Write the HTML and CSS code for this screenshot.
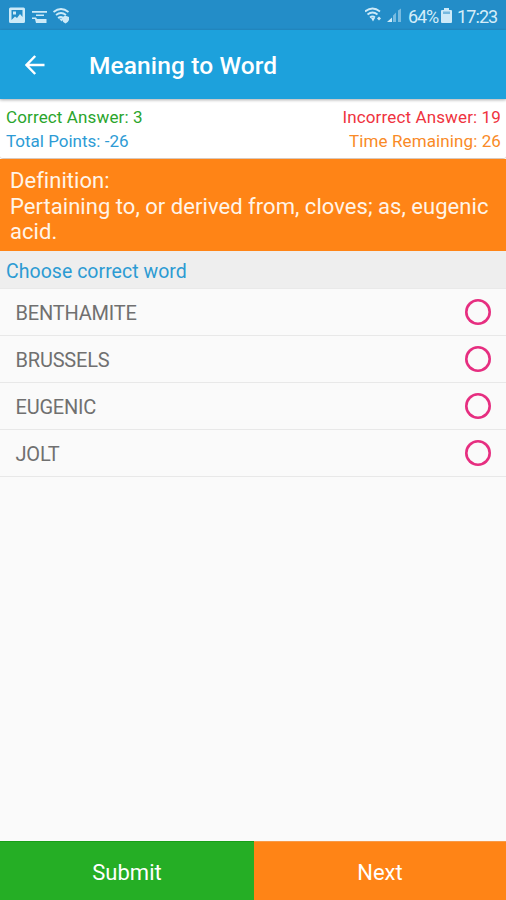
FILE: index.html
```html
<!DOCTYPE html>
<html lang="en">
<head>
<meta charset="utf-8">
<title>Meaning to Word</title>
<link rel="stylesheet" href="styles.css">
</head>
<body>
<div class="status">
  <svg class="notices" width="64" height="18" viewBox="0 0 64 18">
    <path fill-rule="evenodd" d="M2.500 .5h13a1.500 1.500 0 0 1 1.500 1.500v12.500a1.500 1.500 0 0 1-1.500 1.500H2.500a1.500 1.500 0 0 1-1.500-1.500V2A1.500 1.500 0 0 1 2.500 .5zM3.500 3v10l3.500-3.500 2 1.500 3-4 2.500 3V3zM5 4.500h3v3H5z"/>
    <path d="M24 4h15v1.800H24zM28 7.500h8V9h-8zM24 10.500h4l1 1.500h9.500v4H28l-1-4h-3z"/>
    <g class="line"><path d="M45.500 5q7.500-6 15 0M48 8q5-4 10 0M50 11q3-2 5 0"/></g>
    <path d="M51 11.500h4l-1.500 3zM57 8.500l4 1.500v3q-1 2.500-3.500 3.500-3-1.500-3.500-4v-2z"/>
  </svg>
  <div class="status-right">
    <svg width="38" height="18" viewBox="0 0 38 18">
      <g class="line"><path d="M0 4.500q7.500-6 15 0M2.500 7.500q5-4 10 0M5 10.500q2.500-2 5 0"/></g>
      <path d="M6 11h4l-2 3.500zM14 9.500l2 2-2 2-2-2zM22 15l5-4.500V15z"/>
      <path class="faint" d="M28 8.500l3-3V15h-3zM33 3.500l3-2V15h-3z"/>
    </svg>
    <span class="percent">64%</span>
    <svg class="battery" width="11" height="16" viewBox="0 0 11 16"><path d="M3 0h5v2h2q1 0 1 1v11q0 1-1 1H1q-1 0-1-1V3q0-1 1-1h2z"/><path class="gap" d="M2 3.500h7V6H2z"/></svg>
    <span class="clock">17:23</span>
  </div>
</div>
<header class="bar">
  <svg width="20" height="20" viewBox="0 0 20 20"><path d="M19.500 10H2M10.200 1L1.500 10l8.700 9"/></svg>
  <h1>Meaning to Word</h1>
</header>
<section class="score">
  <div class="row"><span class="correct">Correct Answer: 3</span><span class="incorrect">Incorrect Answer: 19</span></div>
  <div class="row"><span class="points">Total Points: -26</span><span class="time">Time Remaining: 26</span></div>
</section>
<section class="definition">Definition:<br>Pertaining to, or derived from, cloves; as, eugenic<br>acid.</section>
<div class="prompt">Choose correct word</div>
<ul class="options">
  <li><span>BENTHAMITE</span><i class="radio"></i></li>
  <li><span>BRUSSELS</span><i class="radio"></i></li>
  <li><span>EUGENIC</span><i class="radio"></i></li>
  <li><span>JOLT</span><i class="radio"></i></li>
</ul>
<footer class="actions"><div class="submit">Submit</div><div class="next">Next</div></footer>
</body>
</html>
```
FILE: styles.css
```css
* { box-sizing: border-box; }
body { margin: 0; height: 900px; display: flex; flex-direction: column; overflow: hidden; background: #fafafa; font-family: Roboto, "Liberation Sans", sans-serif; }
.status { height: 30px; flex: none; display: flex; justify-content: space-between; padding: 7px 9px 0 8px; background: #238dc8; color: #d5edf9; }
.status svg { fill: #cdeaf8; flex: none; }
.status .line { fill: none; stroke: #cdeaf8; stroke-width: 1.800; }
.status .faint { opacity: .5; }
.status-right { display: flex; font-size: 18px; line-height: 19px; }
.percent { margin-left: 5px; width: 29px; letter-spacing: -1.100px; }
.battery { margin: 1px 5px 0 4px; }
.status .gap { fill: #75b9df; }
.clock { width: 40px; letter-spacing: -.9px; }
.bar { height: 69px; flex: none; display: flex; align-items: center; padding: 2px 0 0 25px; background: #1da1dc; color: #fff; position: relative; box-shadow: 0 1px 3px #0005; }
.bar svg { fill: none; stroke: #fff; stroke-width: 2.500; margin-top: -2px; }
.bar h1 { margin: 0 0 0 44px; font-size: 24.500px; font-weight: 500; line-height: 30px; letter-spacing: .12px; white-space: nowrap; }
.score { height: 60px; flex: none; padding: 6px 5px 0 6px; background: #fff; border-bottom: 1px solid #d8c8bc; border-radius: 3px; font-size: 17px; line-height: 24px; }
.row { display: flex; justify-content: space-between; }
.correct { color: #2aa52c; letter-spacing: .13px; }
.incorrect { color: #ef3340; letter-spacing: .13px; }
.points { color: #2d9bd5; }
.time { color: #f98a27; letter-spacing: .1px; }
.definition { height: 92px; flex: none; padding: 9px 10px 0; background: #ff8416; color: #fff4e8; font-size: 22px; line-height: 25.700px; letter-spacing: .04px; white-space: nowrap; }
.prompt { height: 38px; flex: none; padding-left: 6px; background: #eee; border-bottom: 1px solid #e9e9e9; color: #2c9bd3; font-size: 19.500px; line-height: 41px; letter-spacing: .03px; }
.options { flex: 1; margin: 0; padding: 0; list-style: none; }
.options li { height: 46.900px; display: flex; justify-content: space-between; align-items: center; padding: 0 15px; border-bottom: 1px solid #e8e8e8; color: #707070; font-size: 20px; line-height: 24px; }
.options span { padding: 2px 0 0 .5px; letter-spacing: -.2px; }
.radio { width: 26px; height: 26px; border-radius: 50%; box-shadow: inset 0 0 0 2.600px #e62e80; }
.actions { height: 59px; flex: none; display: grid; grid-template-columns: 254px 252px; color: #fff; font-size: 22px; line-height: 61px; text-align: center; }
.submit { background: #25ae25; border-top: 1px solid #179f17; }
.next { background: #ff8416; border-top: 1px solid #f89a48; }
```
